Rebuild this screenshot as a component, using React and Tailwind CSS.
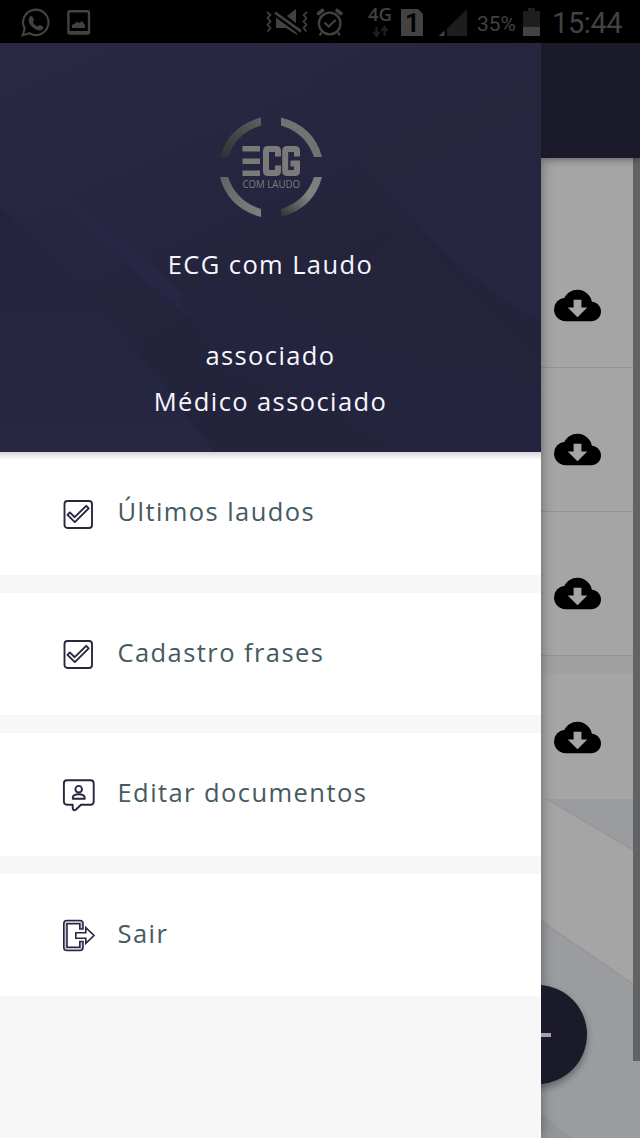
import React from "react";
import { MdCloudDownload } from "react-icons/md";

const font = "font-['Open_Sans','Noto_Sans',sans-serif]";

function StatusBar() {
  return (
    <header className="flex h-[43px] w-full shrink-0 items-center bg-black">
      <svg className="h-[43px] w-[470px] shrink-0" viewBox="0 0 470 43" fill="none" stroke="#424242">
        <path d="M22.8 35.2l1.9-6.7a12.7 12.7 0 1 1 4.7 4.8z" strokeWidth="2.2" />
        <path d="M29.4 17.3c1.300-1.900 2.500-1.700 3.300-.2l1.300 3c.2.700-1.300 2.100-1.100 2.500 1.200 2 2.600 3.100 4.700 4 .5.2 1.500-1.800 2.200-1.600l3.200 1.500c.7.400.1 2.800-1.500 3.600-2.300 1.200-5.300.2-8.500-2.500-3.400-3-5.600-6.600-3.600-10.300z" fill="#424242" stroke="none" />
        <path d="M69.500 10h18.500q2.200 0 2.200 2.200v20.300q0 2.300-2.200 2.300h-18.500q-2.300 0-2.300-2.300v-20.300q0-2.200 2.300-2.200zm.1 2.400v18.500h18.200v-18.500z" fill="#424242" fillRule="evenodd" stroke="none" />
        <path d="M72 28v-3l3-1.500 2-2 2 1.500 3-2 3 4v3z" fill="#424242" stroke="none" />
        <path d="M267 12l3.500 3-3 3 3 3.500-3 3 3 3.500-3 3.500M307 12l-3.500 3 3 3-3 3.500 3 3-3 3.500 3 3.500" strokeWidth="1.700" />
        <path d="M276 17.500L297 33V35L286 28H276ZM287 16l9-7v14z" fill="#424242" stroke="none" />
        <path d="M274 14.500l26 19" stroke="#000" strokeWidth="2" />
        <path d="M275 12.500l26 18.800" strokeWidth="2.700" />
        <circle cx="329.700" cy="23.500" r="10.800" strokeWidth="2.300" />
        <path d="M324.500 22.500l4.200 4 7-6.500M321.500 32.500l-1.800 3M338 32.500l1.800 3" strokeWidth="2.300" />
        <path d="M318.500 13.500l4-3M341 13.500l-4-3" strokeWidth="3.600" strokeLinecap="round" />
        <text x="368" y="21" fontFamily="Open Sans" fontSize="18.500" fontWeight="600" textLength="24" lengthAdjust="spacingAndGlyphs" fill="#424242" stroke="none">4G</text>
        <path d="M376.500 27v8m-3-3l3 4 3-4M384.500 36v-8m-3 3l3-4 3 4" stroke="#202020" strokeWidth="2" />
        <path d="M401 9h17l5 5v22h-22z" fill="#424242" stroke="none" />
        <text x="405" y="32" fontFamily="Roboto" fontSize="26" fontWeight="600" fill="#000" stroke="none">1</text>
        <path d="M447 36V28.500L467 9v27z" fill="#1d1d1d" stroke="none" />
        <path d="M438.500 36l6-5.500V36z" fill="#424242" stroke="none" />
      </svg>
      <span className="ml-[7px] mt-[5px] w-[40px] whitespace-nowrap font-[Roboto] text-[21px] leading-none tracking-[-0.1px] text-[#424242]">35%</span>
      <svg className="ml-[5px] h-[43px] w-[19px] shrink-0" viewBox="0 0 19 43">
        <path d="M1 36V11h5V8h7v3h5v25z" fill="#1e1e1e" />
        <path d="M1 27h17v9H1z" fill="#424242" />
      </svg>
      <span className="ml-[11px] mt-[3px] whitespace-nowrap font-[Roboto] text-[29px] leading-none tracking-[-0.4px] text-[#424242]">15:44</span>
    </header>
  );
}

function Logo() {
  return (
    <svg className="mt-[72px] h-[104px] w-[108px] shrink-0" viewBox="217 115 108 104">
      <defs>
        <linearGradient id="tl" x1="0" y1="1" x2="1" y2="0"><stop stopColor="#303035" /><stop offset=".3" stopColor="#3d3d3d" /><stop offset="1" stopColor="#606060" /></linearGradient>
        <linearGradient id="br" x1="0" y1="1" x2="1" y2="0"><stop stopColor="#303033" /><stop offset=".6" stopColor="#828282" /><stop offset="1" stopColor="#7b7b7b" /></linearGradient>
        <linearGradient id="bl" x1="0" y1="0" x2="1" y2="1"><stop stopColor="#636363" /><stop offset="1" stopColor="#808080" /></linearGradient>
      </defs>
      <path d="M261 117.500V125.500Q236 133 228 157H220Q228 127 261 117.500Z" fill="url(#tl)" />
      <path d="M281 117.500Q314 126 322 157H314Q306 133 281 125.500Z" fill="#727272" />
      <path d="M220 177H228Q236 201 261 209V217Q228 208 220 177Z" fill="url(#bl)" />
      <path d="M322 177Q314 208 281 217V209Q306 201 314 177Z" fill="url(#br)" />
      <path d="M242.500 146H260V151.500H242.500ZM242.500 158.500H260V164H242.500ZM242.500 170.500H260V176H242.500Z" fill="#7a7a7a" />
      <g fill="none" stroke="#7a7a7a" strokeWidth="6">
        <path d="M278 156.500V151Q278 149 276 149H268Q266 149 266 151V171Q266 173 268 173H276Q278 173 278 171V165.500" />
        <path d="M297 156.500V151Q297 149 295 149H287.200Q285.200 149 285.200 151V171Q285.200 173 287.200 173H295Q297 173 297 171V163.500H290.500" />
      </g>
      <text x="242.500" y="187.800" fontFamily="Open Sans" fontSize="10.800" letterSpacing="0" style={{ letterSpacing: 0 }} textLength="57.500" lengthAdjust="spacingAndGlyphs" fill="#7c7c7f">COM LAUDO</text>
    </svg>
  );
}

function ProfileHeader() {
  return (
    <section className="relative z-10 h-[409px] w-full shrink-0 overflow-hidden bg-[#25253f]">
      <svg className="absolute inset-0 h-full w-full" viewBox="0 43 541 409" preserveAspectRatio="none">
        <defs>
          <linearGradient id="bg" x1="0" y1="0" x2=".6" y2="1"><stop stopColor="#292945" /><stop offset=".4" stopColor="#262641" /><stop offset=".65" stopColor="#23233b" /><stop offset="1" stopColor="#23233b" /></linearGradient>
          <linearGradient id="ribbon" x1="0" y1="0" x2="1" y2="1"><stop stopColor="#272744" /><stop offset=".6" stopColor="#272745" /><stop offset="1" stopColor="#23233b" /></linearGradient>
          <linearGradient id="corner" x1="0" y1="0" x2=".4" y2="1"><stop stopColor="#272743" /><stop offset=".5" stopColor="#25253e" /><stop offset="1" stopColor="#262642" /></linearGradient>
          <linearGradient id="lower" x1="0" y1="0" x2="0" y2="1"><stop stopColor="#23233c" /><stop offset="1" stopColor="#272744" /></linearGradient>
        </defs>
        <path d="M0 43H541V452H0Z" fill="url(#bg)" />
        <path d="M290 43H541V322Q455 270 405 213Q345 155 290 43Z" fill="url(#corner)" />
        <path d="M40 183Q110 225 180 290Q230 330 260 372L180 310Q110 250 40 183Z" fill="url(#ribbon)" />
        <path d="M0 207Q60 255 122 332L214 452H0Z" fill="url(#lower)" />
        <path d="M225 270Q330 355 541 385V452H405Q320 400 225 370L180 300Z" fill="#24243e" />
        <path d="M235 285Q340 365 541 385V360Q480 320 405 213Q390 270 300 270Z" fill="#24243d" />
      </svg>
      <div className={`relative flex h-full flex-col items-center whitespace-nowrap text-[25.500px] tracking-[1.400px] text-[#f7f7ff] ${font}`}>
        <Logo />
        <p className="mt-[22px] h-[46px] leading-[46px]">ECG com Laudo</p>
        <p className="mt-[45px] h-[46px] leading-[46px]">associado</p>
        <p className="h-[46px] leading-[46px]">Médico associado</p>
      </div>
    </section>
  );
}

function CheckIcon() {
  return (
    <svg className="h-[36px] w-[36px]" viewBox="0 0 36 36" fill="none" stroke="#292740" strokeWidth="1.900" strokeLinejoin="round">
      <rect x="3.500" y="5" width="27.500" height="27" rx="3" />
      <path d="M6.500 18.800L8.800 16.400L13.700 21.200L25.200 9.800L27.700 12.300L13.800 26.100Z" />
    </svg>
  );
}

function PersonIcon() {
  return (
    <svg className="h-[36px] w-[36px]" viewBox="0 0 36 36" fill="none" stroke="#292740" strokeWidth="1.900" strokeLinejoin="round">
      <path d="M6 3.200H29.500Q32.700 3.200 32.700 6.400V24.500Q32.700 27.700 29.500 27.700H20L15 32.500Q12.200 34.500 11.700 31V27.700H6Q2.900 27.700 2.900 24.500V6.400Q2.900 3.200 6 3.200Z" />
      <circle cx="17.700" cy="12.200" r="3.300" />
      <path d="M11.800 21.700V20.200Q12.500 17.300 17.700 17.300T23.700 20.200V21.700Z" />
    </svg>
  );
}

function ExitIcon() {
  return (
    <svg className="h-[36px] w-[36px]" viewBox="0 0 36 36" fill="none" stroke="#292740" strokeWidth="1.600" strokeLinejoin="miter">
      <path d="M22 12V6.500Q22 3.500 19 3.500H5.800Q2.800 3.500 2.800 6.500V30.500Q2.800 33.500 5.800 33.500H19Q22 33.500 22 30.500V24.500H18.800V30.300H6V6.700H18.800V12Z" fill="#c9c8dc" />
      <path d="M14.800 15.800H24.800V10.700L33 18.500L24.800 26.300V21.300H14.800Z" fill="#fff" />
    </svg>
  );
}

const menu = [
  { label: "Últimos laudos", Icon: CheckIcon },
  { label: "Cadastro frases", Icon: CheckIcon },
  { label: "Editar documentos", Icon: PersonIcon },
  { label: "Sair", Icon: ExitIcon },
];

function Drawer() {
  return (
    <aside className="relative z-10 flex w-[541px] shrink-0 flex-col bg-[#f7f7f7] shadow-[0_0_12px_rgba(0,0,0,0.4)]">
      <ProfileHeader />
      <nav className="flex flex-col gap-[18px]">
        {menu.map(({ label, Icon }) => (
          <a key={label} className="flex h-[122.500px] items-center bg-white pl-[61px]">
            <span className="mt-px"><Icon /></span>
            <span className={`ml-[20.500px] -mt-[4px] whitespace-nowrap text-[25.500px] tracking-[1.430px] text-[#455a61] ${font}`}>{label}</span>
          </a>
        ))}
      </nav>
      <div className="absolute top-[409px] h-[8px] w-full bg-gradient-to-b from-[#d5d4de] to-transparent" />
    </aside>
  );
}

function ReportRow({ className }) {
  return (
    <div className={`flex w-full shrink-0 items-end border-b border-[#949494] bg-[#a5a5a5] pl-[12.500px] ${className}`}>
      <MdCloudDownload className="size-[47px] text-black" />
    </div>
  );
}

function ReportList() {
  return (
    <main className="relative flex w-[99px] flex-col overflow-hidden bg-[#9b9c9f]">
      <div className="z-10 h-[115px] shrink-0 bg-[#1a1a2a] shadow-[0_1px_8px_rgba(0,0,0,0.45)]" />
      <ReportRow className="h-[210px] pb-[38px]" />
      <ReportRow className="h-[144px] pb-[38px]" />
      <ReportRow className="h-[144px] pb-[38px]" />
      <div className="h-[17px] shrink-0 bg-[#a0a0a0]" />
      <ReportRow className="h-[126px] border-transparent pb-[37px]" />
      <svg className="h-[339px] w-[99px] shrink-0" viewBox="541 799 99 339">
        <path d="M541 799H640V1138H541Z" fill="#9b9c9f" />
        <path d="M541 799H547L640 855V989L541 921Z" fill="#a5a5a5" />
        <path d="M547 799L640 854M541 921L640 989" fill="none" stroke="#989898" strokeWidth="2" />
        <path d="M541 1114L572 1138H541Z" fill="#94959b" />
      </svg>
      <div className="absolute left-[-53px] top-[942px] z-10 flex size-[99px] items-center justify-center rounded-full bg-[#1a1a2b] shadow-[0_4px_7px_rgba(0,0,0,0.35)]">
        <span className="mt-px h-[4px] w-[27px] bg-[#a5a5a5]" />
      </div>
      <div className="absolute right-0 top-[115px] h-[903px] w-[7px] bg-[#626363]" />
    </main>
  );
}

export default function App() {
  return (
    <div className="flex h-[1138px] w-[640px] flex-col overflow-hidden bg-black">
      <StatusBar />
      <div className="flex h-[1095px] overflow-hidden">
        <Drawer />
        <ReportList />
      </div>
    </div>
  );
}
